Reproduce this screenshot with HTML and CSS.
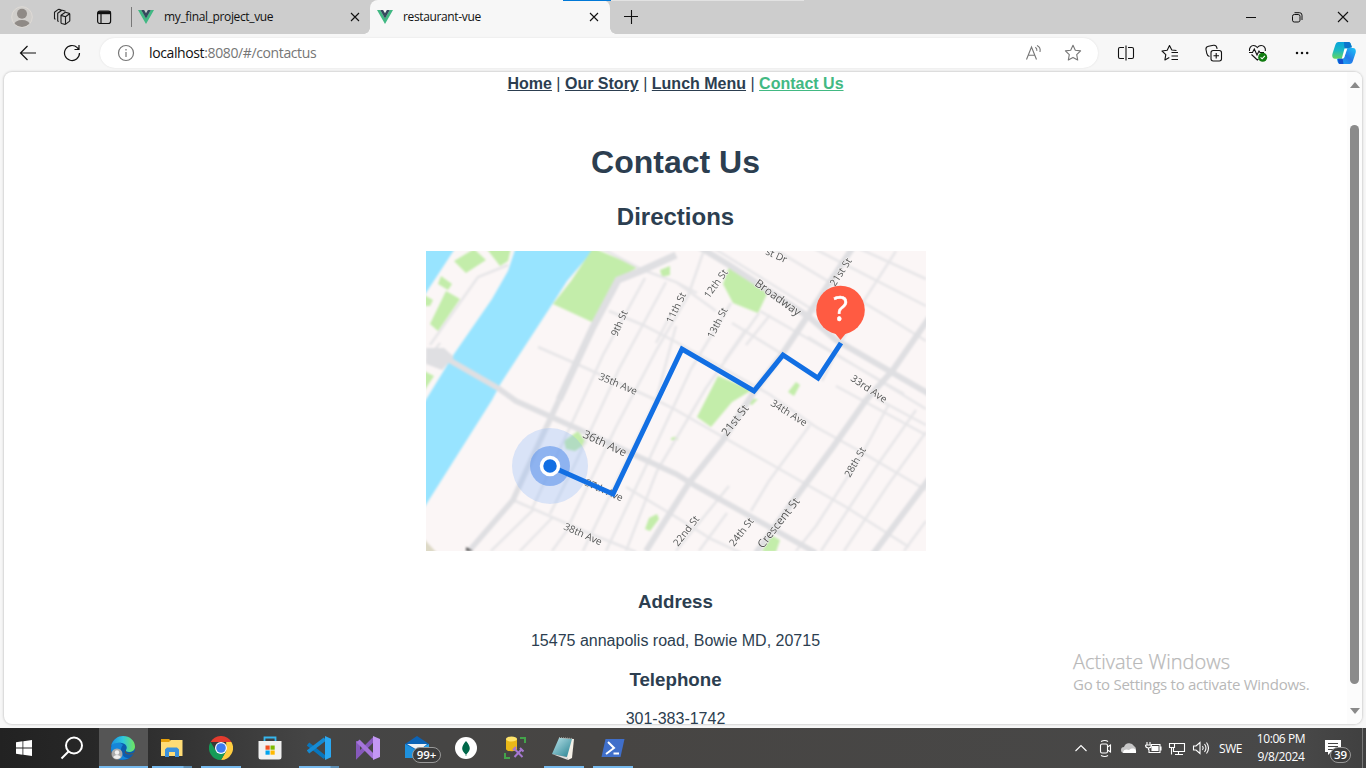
FILE: index.html
```html
<!DOCTYPE html>
<html lang="en">
<head>
<meta charset="utf-8">
<title>restaurant-vue</title>
<link rel="stylesheet" href="styles.css">
</head>
<body>
<svg class="defs" width="0" height="0">
  <defs>
    <symbol id="vue" viewBox="0 0 16 14"><path fill="#41b883" d="M0 0h3.2L8 8.3 12.8 0H16L8 14z"/><path fill="#35495e" d="M3.2 0h2.9L8 3.3 9.900 0h2.900L8 8.400z"/></symbol>
    <symbol id="close" viewBox="0 0 10 10"><path d="M1 1l8 8M9 1L1 9" fill="none" stroke="#111" stroke-width="1.1"/></symbol>
  </defs>
</svg>

<header class="tabbar">
  <div class="slot profile"><svg width="22" height="22" viewBox="0 0 22 22"><defs><clipPath id="pc"><circle cx="11" cy="11" r="10"/></clipPath></defs><circle cx="11" cy="11" r="10.300" fill="#d0cecb" stroke="#dedad5"/><g clip-path="url(#pc)" fill="#8f8a86"><circle cx="11" cy="7.800" r="5"/><ellipse cx="11" cy="19" rx="8" ry="5"/></g></svg></div>
  <div class="slot work"><svg width="18" height="18" viewBox="0 0 18 18" fill="none" stroke="#1b1b1b" stroke-width="1.100" stroke-linejoin="round"><path d="M8 7.200l4-2.700q.6-.3 1.200-.1l2.800.9q.8.300.8 1.100v6q0 .6-.5 1l-3.600 2.700q-.5.400-1.200.200l-2.800-.9q-.7-.3-.7-1zM8 7.400l4.500 1.400v7.200M12.500 8.800L16.600 5.800"/><path d="M5.700 13.400l-1-.4V5.300L8.500 2.500q.5-.3 1-.2l3 .9M2.500 11.200l-1-.5V4.200L5 1.600q.5-.3 1-.2l2.500.7"/></svg></div>
  <div class="slot vert"><svg width="16" height="16" viewBox="0 0 16 16" fill="none" stroke="#111" stroke-width="1.200"><rect x="1.600" y="2" width="13" height="12.500" rx="2.200"/><path d="M2 3.700h12.500" stroke-width="3"/><path d="M5 5v9.500"/></svg></div>
  <i class="sep"></i>
  <div class="tab tab-idle"><svg class="vue"><use href="#vue"/></svg><span>my_final_project_vue</span><svg class="close"><use href="#close"/></svg></div>
  <div class="tab tab-active"><svg class="vue"><use href="#vue"/></svg><span>restaurant-vue</span><svg class="close"><use href="#close"/></svg><i class="blue-line"></i></div>
  <div class="strip"><svg width="16" height="16" viewBox="0 0 16 16"><path d="M1 7.500h14M8.500 1v14" stroke="#111" stroke-width="1.100"/></svg></div>
  <div class="winbtns">
    <svg width="46" height="34" viewBox="0 0 46 34"><path d="M18 17.500h10" stroke="#111"/></svg>
    <svg width="46" height="34" viewBox="0 0 46 34" fill="none" stroke="#111"><rect x="18.500" y="14.500" width="7.500" height="7.500" rx="1.800"/><path d="M20.500 12.700h5a2.500 2.500 0 0 1 2.500 2.500v4.800"/></svg>
    <svg width="46" height="34" viewBox="0 0 46 34"><path d="M18 12l10 10M28 12L18 22" stroke="#111" stroke-width="1.100"/></svg>
  </div>
</header>

<div class="toolbar">
  <div class="navbtn back"><svg width="18" height="16" viewBox="0 0 18 16" fill="none" stroke="#111" stroke-width="1.200"><path d="M17 8H1.500M8.500 1L1.500 8l7 7"/></svg></div>
  <div class="navbtn"><svg width="18" height="18" viewBox="0 0 18 18" fill="none" stroke="#111" stroke-width="1.200"><path d="M16.500 9A7.500 7.500 0 1 1 14.300 3.700L15.700 5M16 1v4.500h-4.500"/></svg></div>
  <div class="pill">
    <svg class="info" width="18" height="18" viewBox="0 0 18 18" fill="none" stroke="#767676" stroke-width="1.200"><circle cx="9" cy="9" r="7.500"/><path d="M9 8v5M9 5v1.500"/></svg>
    <span class="url"><b>localhost</b>:8080/#/contactus</span>
    <svg class="aloud" width="18" height="18" viewBox="0 0 18 18" fill="none" stroke="#767676" stroke-width="1.100"><path d="M1.500 15.500L6.500 3l5 12.500M3.300 11.300h6.500M10.300 3.300q2 1.200 1.500 3.500M12 1.600Q16 3.500 15 8"/></svg>
    <svg class="star" width="18" height="18" viewBox="0 0 18 18" fill="none" stroke="#767676" stroke-width="1.100" stroke-linejoin="round"><path d="M9 1.300l2.300 4.900 5.300.7-3.900 3.700 1 5.400L9 13.400 4.300 16l1-5.400L1.400 6.900l5.300-.7z"/></svg>
  </div>
  <div class="tools">
    <svg width="18" height="18" viewBox="0 0 18 18" fill="none" stroke="#111" stroke-width="1.100"><path d="M7 3.500H3A1.500 1.500 0 0 0 1.500 5v8A1.500 1.500 0 0 0 3 14.500h4M11 3.500h4A1.500 1.500 0 0 1 16.500 5v8a1.500 1.500 0 0 1-1.500 1.500h-4M9 1.500v15"/></svg>
    <svg width="18" height="18" viewBox="0 0 18 18" fill="none" stroke="#111" stroke-width="1.100" stroke-linejoin="round"><path d="M15.500 6.500l-4.700-.5-2.300-4.500-2.300 4.700-5.200.8 3.800 3.600-.9 5.300 4.400-2.500M10.500 8.500h6.500M10.500 12h6.500M10.500 15.500h6.500"/></svg>
    <svg width="18" height="18" viewBox="0 0 18 18" fill="none" stroke="#111" stroke-width="1.100"><rect x="6" y="6.500" width="10.500" height="10.500" rx="2.200"/><path d="M11.200 9v5.500M8.500 11.700H14M4.500 12.500C2 12 2 10.500 1.700 9L1 5.500C.7 3.500 2 2.600 3.500 2.300L8.500 1.300c2-.3 3 .7 3.400 2.500l.2 1"/></svg>
    <svg width="20" height="20" viewBox="0 0 20 20" fill="none" stroke="#111" stroke-width="1.100"><path d="M1.500 8C1 5 3 2.500 5.500 2.500c2 0 3 1 3.800 2 .8-1 1.900-2 3.800-2 3 0 4.800 2.500 4.200 5.500M3.500 11.500l5.800 5.500 1.200-1M1 9.500h3.500l1.800-3.500 2.700 6 2-4 1 1.500h4"/><circle cx="14.700" cy="14.200" r="4.500" fill="#107c10" stroke="none"/><path d="M12.600 14.300l1.500 1.500 2.800-3" stroke="#fff"/></svg>
    <svg width="18" height="18" viewBox="0 0 18 18" fill="#111"><circle cx="4" cy="9" r="1.250"/><circle cx="9" cy="9" r="1.250"/><circle cx="14.200" cy="9" r="1.250"/></svg>
    <svg class="copilot" width="24" height="24" viewBox="0 0 24 24"><defs><linearGradient id="ca" x2="0" y2="1"><stop stop-color="#07a3dc"/><stop offset=".5" stop-color="#1bb9c3"/><stop offset="1" stop-color="#64d55f"/></linearGradient><linearGradient id="cb" x1="1" x2="0" y2="1"><stop stop-color="#1dc7f8"/><stop offset=".5" stop-color="#2479e8"/><stop offset="1" stop-color="#18b2fa"/></linearGradient></defs><path fill="url(#ca)" d="M6.500 1h10.200c2 0 2.400 3 3.200 4.800l-5 2.400-2.400 7.200c-.6 1.600-1.500 2.300-3.300 2.300H3C0 17.700-.2 14.500.7 12L3.300 4C4 2.200 4.800 1 6.500 1z"/><path fill="#0c75cc" d="M12 1h4.700c1.700 0 2.300 3 3.200 5.500l-6.700.7C12 7 12.200 3 12 1z"/><path fill="url(#cb)" d="M15.500 7H21c3 0 3.200 3 2.500 5.200l-2.700 8c-.6 1.800-1.500 2.800-3.300 2.800H8c-2.200 0-2.500-3-3.200-5.300h4.400c1.800 0 2.700-.7 3.300-2.300l1.600-5.600c.3-1 .6-2 1.400-2.800z"/><path fill="#1451cf" d="M6 17.700h4.700L11.500 23H8c-1.500 0-2-2.300-2-5.300z"/><path fill="#fff" d="M12.500 7.500h2.800l-3 8.700c-.4 1-1.300 1.400-2.500 1.400z"/></svg>
  </div>
</div>

<div class="viewport">
  <main class="page">
    <nav><a>Home</a> | <a>Our Story</a> | <a>Lunch Menu</a> | <a class="current">Contact Us</a></nav>
    <h1>Contact Us</h1>
    <h2>Directions</h2>
    <svg class="map" width="500" height="300" viewBox="0 0 500 300">
      <defs>
        <filter id="soft" x="0" y="0" width="1" height="1" color-interpolation-filters="sRGB"><feGaussianBlur stdDeviation=".8"/></filter>
        <filter id="crisp" color-interpolation-filters="sRGB"><feGaussianBlur stdDeviation=".4"/></filter>
      </defs>
      <rect width="500" height="300" fill="#fbf6f6"/>
      <g filter="url(#soft)">
        <rect x="-5" y="-5" width="510" height="310" fill="#fbf6f6"/>
        <path fill="#98e4ff" d="M90-4L82 20 66 48 28 103-4 155V260L66 149 75 132 127 52 141 30 170-4zM-4-4H30L-4 48z"/>
        <g fill="#c3edaa">
          <path d="M167-3l45 19-22 13-24 42-39-18 18-23zM28 10L48-2l12 11-20 13zM60-3h25l-3 13-8 5zM15 25l11 8-4 6-10-6zM20 40l14 8-22 32-8-7zM-2 44l9 5-3 6h-6zM-2 120l10 5-10 15zM303 16l12 3 26 24-9 19-25-10-10-19zM292 125l34 14-20 12-21 25-14-10zM370 131l4 3-6 11-6-4zM345 284l9 5-4 12h-14l5-10zM138 190l14-10 9 12-12 8-9-2zM234 19l10-4v9l-8 2zM245 187l7-2v4h-7zM223 267l8-4 2 5-9 12-5-2zM322 148h10l-6 6-8-3z"/>
        </g>
        <g fill="none" stroke="#e7e6e8" stroke-width="2.500">
          <path d="M4 94L52 26 82 14M0 110L14 92"/>
          <path d="M112 96L153 114 230 149 250 159 297 186 357 220 420 256 483 296"/>
          <path d="M183 60L217 74 250 91 343 143 390 176 437 202 500 239"/>
          <path d="M177-2L217 19 250 31 290 60M250 31L271 42M306 72L356 103"/>
          <path d="M289-2L400 67M345-4L460 65 500 90M385-4L500 55M430-4L500 28M450 147L483 165 500 174"/>
          <path d="M334 60L478 143M382 86L500 158M410 135L500 184"/>
          <path d="M219 27L177 104 158 146 106 258M240 31L193 118 148 215 124 263M277 2L262 45 231 98 190 176 144 272"/>
          <path d="M250 75L230 149 157 300M305 52L265 118 220 215 180 300M333 62L280 137 231 220 200 300"/>
          <path d="M87 249L160 281 210 301M200 236L250 266 285 288 315 302"/>
          <path d="M470 0L430 62 396 130M384 174L343 230 325 260M463 153L435 205 390 275 370 300M490 159L450 216 395 300M500 181L462 234 418 300M500 270L478 300M303 235L250 300M301 262L273 300"/>
          <path d="M108 258L65 300M126 267L94 300M145 274L126 300M245 63L230 92M320 78L298 110M344 64L320 94"/>
        </g>
        <g fill="none" stroke="#dfdfe2">
          <path stroke-width="7" d="M250 4L217 19 192 29 167 76 133 149"/>
          <path stroke-width="5.500" d="M133 149L113 192 87 249 43 300"/>
          <path stroke-width="5.500" d="M18 106L72 137 90 150 150 177 250 223 270 235 390 302"/>
          <path stroke-width="6" d="M270-6L303 14 383 66 410 89 505 144"/>
          <path stroke-width="6" d="M427-4L377 72 357 102 328 141 297 189 263 232 220 300"/>
          <path stroke-width="6" d="M503 67L467 119 440 149 407 196 373 242 330 302M503 228L447 303"/>
        </g>
        <path d="M0 97h18l10 9-12 13-16-6z" fill="#dfdfe2"/>
        <path d="M-2 288l13 14H-2z" fill="#ddd9c6"/><path d="M40 296l7 4h-7z" fill="#555"/>
      </g>
      <g filter="url(#crisp)">
        <g class="streets">
          <text transform="translate(191 86) rotate(-66)">9th St</text>
          <text transform="translate(246 73) rotate(-64)">11th St</text>
          <text transform="translate(283 48) rotate(-54)">12th St</text>
          <text transform="translate(287 88) rotate(-63)">13th St</text>
          <text transform="translate(409 36) rotate(-57)">21st St</text>
          <text class="big" transform="translate(328 34) rotate(36)">Broadway</text>
          <text transform="translate(339 3) rotate(24)">st Dr</text>
          <text transform="translate(172 128) rotate(23)">35th Ave</text>
          <text class="big" transform="translate(156 186) rotate(25)">36th Ave</text>
          <text transform="translate(158 234) rotate(24)">37th Ave</text>
          <text transform="translate(137 278) rotate(24)">38th Ave</text>
          <text transform="translate(344 154) rotate(32)">34th Ave</text>
          <text transform="translate(424 129) rotate(34)">33rd Ave</text>
          <text class="big" transform="translate(301 186) rotate(-52)">21st St</text>
          <text transform="translate(424 227) rotate(-60)">28th St</text>
          <text transform="translate(252 296) rotate(-52)">22nd St</text>
          <text transform="translate(308 296) rotate(-52)">24th St</text>
          <text class="big" transform="translate(337 298) rotate(-52)">Crescent St</text>
        </g>
        <circle cx="124" cy="215" r="38" fill="#8bb7f7" opacity=".3"/>
        <circle cx="124" cy="215" r="20" fill="#6799ed" opacity=".65"/>
        <path d="M124 215L187 243 256 98 328 140 357 104 392 127 415 92" fill="none" stroke="#126fe3" stroke-width="5"/>
        <circle cx="124" cy="215" r="8.500" fill="#126fe3" stroke="#fff" stroke-width="3.500"/>
        <path d="M408 81l6.500 8 6.500-8z" fill="#ff5b42"/><circle cx="414.500" cy="59" r="24.300" fill="#ff5b42"/>
        <text class="q" x="414.500" y="70">?</text>
      </g>
    </svg>
    <h3>Address</h3>
    <p>15475 annapolis road, Bowie MD, 20715</p>
    <h3>Telephone</h3>
    <p>301-383-1742</p>
  </main>
  <div class="scroll"><i class="up"></i><i class="thumb"></i><i class="down"></i></div>
</div>
<div class="watermark"><div class="w1">Activate Windows</div><div class="w2">Go to Settings to activate Windows.</div></div>

<footer class="taskbar">
  <div class="apps">
    <div class="app"><svg width="16" height="16" viewBox="0 0 16 16" fill="#fff"><path d="M0 2.200l6.500-.9v6.300H0zM7.300 1.200L16 0v7.600H7.300zM0 8.400h6.500v6.300L0 13.800zM7.300 8.400H16V16l-8.700-1.200z"/></svg></div>
    <div class="app search"><svg width="24" height="24" viewBox="0 0 24 24" fill="none" stroke="#fff" stroke-width="2"><circle cx="14" cy="9.500" r="8"/><path d="M8.500 15.500L1.500 22.500"/></svg></div>
    <div class="app on active"><svg width="24" height="24" viewBox="0 0 24 24"><defs><linearGradient id="ea"><stop stop-color="#1c91df"/><stop offset=".5" stop-color="#30c8dc"/><stop offset="1" stop-color="#71e65c"/></linearGradient></defs><circle cx="12" cy="12" r="12" fill="#0c5cae"/><path fill="#1686d9" d="M0 12C1 6 8 5 12 9c-4 4-2 13 6 13C8 27 0 20 0 12z"/><path fill="url(#ea)" d="M0 10C2 3 7 0 12 0c7 0 12 5 12 10.500 0 4-3 5.500-6 5.500-2 0-3.500-1-3-2 2-3 0-6-4-7C7 6 2 7 0 10z"/><path fill="#555" d="M14.500 14c0 4 5 4.500 9.500 2l-1 2c-7 1.500-11-.5-8.500-4z"/><circle cx="6" cy="18" r="5.500" fill="#aaa"/><circle cx="6" cy="16.500" r="2.200" fill="#f0f0f0"/><path d="M2 21q4-4 8 0-4 4-8 0" fill="#eee"/></svg></div>
    <div class="app on multi"><svg width="22" height="20" viewBox="0 0 22 20"><path fill="#e6a10b" d="M0 1h8l2 2v5H0z"/><path fill="#ffdc75" d="M0 4h8l2-2h11.500v16H0z"/><path fill="#3b91dc" d="M4 19V11.500L6 9.500h10l2 2V19h-4v-5H8v5z"/></svg></div>
    <div class="app on"><svg width="24" height="24" viewBox="0 0 24 24"><path fill="#e33b2e" d="M1.600 6A12 12 0 0 1 22.400 6H12z"/><path fill="#ffcd40" d="M22.400 6A12 12 0 0 1 12 24l5.200-9V6z"/><path fill="#159b57" d="M1.600 6A12 12 0 0 0 12 24l5.200-9L7 15z"/><circle cx="12" cy="12" r="6" fill="#fff"/><circle cx="12" cy="12" r="4.800" fill="#3e7cf0"/></svg></div>
    <div class="app"><svg width="24" height="24" viewBox="0 0 24 24"><path d="M6.500 6V1.500h11V6" fill="none" stroke="#36b6ed" stroke-width="1.800"/><path d="M.5 5h23v16a2.500 2.500 0 0 1-2.500 2.500H3A2.500 2.500 0 0 1 .5 21z" fill="#f1f1f1"/><path fill="#f25022" d="M7.500 9.500h4.200v4.200H7.500z"/><path fill="#7fba00" d="M12.500 9.500h4.200v4.200h-4.200z"/><path fill="#00a4ef" d="M7.500 14.500h4.200v4.200H7.500z"/><path fill="#ffb900" d="M12.500 14.500h4.200v4.200h-4.200z"/></svg></div>
    <div class="app on multi"><svg width="24" height="24" viewBox="0 0 24 24"><path fill="none" stroke="#0876bd" stroke-width="4" d="M1 8l17 13.500"/><path fill="none" stroke="#158bd4" stroke-width="4" d="M1 16L18 3"/><path fill="#2aa8f2" d="M18 0l6 2.700v18.600L18 24z"/></svg></div>
    <div class="app"><svg width="24" height="24" viewBox="0 0 24 24"><path fill="none" stroke="#8659bb" stroke-width="4" d="M2 5v14L18 3"/><path fill="none" stroke="#a575da" stroke-width="4.500" d="M2 5l16 16"/><path fill="#c397f4" d="M17 0l7 3v18l-7 3z"/></svg></div>
    <div class="app mail"><svg width="24" height="24" viewBox="0 0 24 24"><path fill="#0c63b5" d="M0 8l12-8 12 8v8H0z"/><path fill="#f0f3f5" d="M2 8h20l-8 7z"/><path fill="#1e91de" d="M0 8l24 13v1H0z"/><path fill="#2da4e9" d="M24 8L8 17l10 5h6z"/></svg><span class="badge">99+</span></div>
    <div class="app"><svg width="22" height="22" viewBox="0 0 22 22"><circle cx="11" cy="11" r="11" fill="#fff"/><path fill="#00684a" d="M11 4c5 6 5 9 .3 13.500V19h-.6v-1.500C6 13 6 10 11 4z"/></svg></div>
    <div class="app"><svg width="24" height="24" viewBox="0 0 24 24"><path fill="#eab818" d="M3 3v10c0 3 11 3 11 0V3z"/><ellipse cx="8.500" cy="3" rx="5.500" ry="2.500" fill="#ffe46a"/><path d="M17 2h5v5M2 17v5h5" fill="none" stroke="#43a34a" stroke-width="2"/><path d="M11.500 13l8 8M18.500 13.500l-7 7.500M10 14l3-3M17 12l3.500 3.500" stroke="#a678d1" stroke-width="2"/></svg></div>
    <div class="app on"><svg width="24" height="24" viewBox="0 0 24 24"><defs><linearGradient id="na" x2="1" y2="1"><stop stop-color="#bce5ec"/><stop offset="1" stop-color="#25808f"/></linearGradient></defs><path fill="#f4f0e7" d="M7 2l15 1-2 19-4 2z"/><path fill="url(#na)" d="M7 2l13 1-5 18L0 18z"/><path fill="#ddd" d="M0 18l15 3 1 3z"/><path d="M7 1.500l14 1" stroke="#a6a5a1" stroke-dasharray="1 1"/></svg></div>
    <div class="app on"><svg width="24" height="20" viewBox="0 0 24 20"><path fill="#406fca" d="M4.500 1H23.500L19.500 19H.5z"/><path d="M7 4l6 6-8 6M12.500 15.500H18" fill="none" stroke="#fff" stroke-width="2"/></svg></div>
  </div>
  <div class="tray">
    <svg viewBox="0 0 24 24"><path d="M6.500 15l5.500-5.500L17.500 15"/></svg>
    <svg viewBox="0 0 24 24"><rect x="7.500" y="8" width="7" height="9" rx="1.500"/><path d="M14.500 11l3-2v7l-3-2M8 5.500q4-2 7 0M8 19.500q4 2 7 0"/></svg>
    <svg viewBox="0 0 24 24"><path d="M7 17a3 3 0 0 1 0-6 5.500 5.500 0 0 1 10-1 4 4 0 0 1 0 7z" fill="#c6c6c6" stroke="none"/><path d="M6 17c0-4 4-4 6-3 4-3 8-1 7 3z" fill="#fff" stroke="none"/></svg>
    <svg viewBox="0 0 24 24"><path d="M10 8.500h9v8H8v-3M20 10.500v4M6 6v3M9 6v3M4.500 9h6q0 3-3 3T4.500 9M7.500 12v2"/><path d="M11 10.500h6v4h-6z" fill="#fff"/></svg>
    <svg viewBox="0 0 24 24"><path d="M9.500 7.500h10v8h-11v-4M13.500 15.500v3M10 18.500h8M4.500 7.500h5v4h-5zM6.500 11.500v7"/></svg>
    <svg viewBox="0 0 24 24"><path d="M4.500 10h2.500l4-3.500v11L7 14H4.500zM13.500 10q1.500 2 0 4M15.500 8q3 4 0 8M17.500 6.500q4 5.500 0 11"/></svg>
    <span class="lang">SWE</span>
    <div class="clock"><div>10:06 PM</div><div>9/8/2024</div></div>
    <div class="note"><svg width="18" height="17" viewBox="0 0 18 17"><path fill="#fff" d="M1 1h16v12H7l-3 3v-3H1z"/><path d="M4 4.500h10M4 7.500h10M4 10.500h6" stroke="#444"/></svg><span class="badge small">39</span></div>
    <i class="peek"></i>
  </div>
</footer>
</body>
</html>
```
FILE: styles.css
```css
* { box-sizing: border-box; }
body { margin: 0; width: 1366px; height: 768px; overflow: hidden; display: flex; flex-direction: column; background: #f7f7f7; font-family: "Open Sans", "Noto Sans", sans-serif; }
.defs { position: absolute; }
svg { display: block; flex: none; }

.tabbar { height: 34px; display: flex; align-items: center; background: #cdcdcd; flex: none; }
.slot { display: flex; justify-content: center; }
.profile { width: 44px; }
.work { width: 36px; }
.vert { width: 48px; }
.sep { width: 1px; height: 20px; background: #777; margin-left: 3px; }
.tab { display: flex; align-items: center; height: 34px; font-size: 12px; color: #111; }
.tab span { flex: 1; letter-spacing: -0.36px; line-height: 16px; }
.tab-idle { width: 238px; padding: 0 10px 0 6px; }
.tab-active { width: 240px; padding: 0 11px 0 7px; background: #f7f7f7; border-radius: 8px 8px 0 0; position: relative; }
.tab-active::before, .tab-active::after { content: ""; position: absolute; bottom: 0; width: 6px; height: 6px; }
.tab-active::before { left: -6px; background: radial-gradient(circle at 0 0, #cdcdcd 5.5px, #f7f7f7 6px); }
.tab-active::after { right: -6px; background: radial-gradient(circle at 100% 0, #cdcdcd 5.5px, #f7f7f7 6px); }
.blue-line { position: absolute; top: 0; left: 193px; width: 48px; height: 1px; background: #0078d7; }
.vue { width: 16px; height: 14px; margin-right: 10px; }
.close { width: 10px; height: 10px; }
.strip { width: 194px; height: 34px; padding: 8px 13px; border-top: 1px solid #e2e2e2; }
.winbtns { display: flex; margin-left: auto; }

.toolbar { height: 38px; flex: none; display: flex; align-items: center; }
.navbtn { width: 44px; display: flex; justify-content: center; }
.back { margin-left: 6px; }
.pill { width: 998px; height: 30px; margin-left: 6px; padding-left: 17px; background: #fff; border-radius: 15px; display: flex; align-items: center; box-shadow: 0 0 2px #ddd; }
.url { margin-left: 14px; font-size: 14px; color: #767676; letter-spacing: -0.38px; flex: 1; line-height: 20px; }
.url b { font-weight: 400; color: #111; }
.star { margin: 0 16px 0 21px; }
.tools { display: grid; grid-template-columns: repeat(5, 44px) 40px; padding-left: 6px; align-items: center; justify-items: center; }

.viewport { height: 652px; margin: 0 4px; display: flex; background: #fff; border-radius: 8px; overflow: hidden; box-shadow: 0 0 2px 1px #d4d4d4; flex: none; }
.page { flex: 1; padding-top: 3px; text-align: center; font-family: "Liberation Sans", Arial, sans-serif; font-size: 16px; line-height: 18px; color: #2c3e50; }
nav { height: 48px; }
nav a { font-weight: 700; text-decoration: underline; }
nav .current { color: #42b983; }
h1 { font-size: 32px; line-height: 37px; margin: 21px 0 22px; }
h2 { font-size: 24px; line-height: 27px; margin: 0 0 21px; }
.map { margin: 0 auto 40px; position: relative; left: 0.5px; }
h3 { font-size: 18.72px; line-height: 22px; margin: 0; }
p { margin: 19px 0; }
.streets { font: 10px "Open Sans", sans-serif; fill: #555; stroke: #f8f6f6; stroke-width: 1px; paint-order: stroke; }
.streets .big { font-size: 11.5px; }
.q { font: 34px "Open Sans", sans-serif; fill: #fff; stroke: #fff; stroke-width: 0.4px; text-anchor: middle; }
.scroll { width: 15px; background: #fcfcfc; display: flex; flex-direction: column; align-items: center; padding: 10px 0; }
.up, .down { border: 5px solid transparent; border-top: 0; border-bottom: 6px solid #8a8a8a; }
.down { border-top: 6px solid #8a8a8a; border-bottom: 0; margin-top: auto; }
.thumb { width: 9px; height: 559px; margin-top: 37px; background: #8b8b8b; border-radius: 5px; }

.watermark { position: absolute; left: 1073px; top: 649px; color: #b8b8b8; white-space: nowrap; }
.w1 { font-size: 20px; line-height: 26px; font-weight: 300; -webkit-text-stroke: 0.25px #b8b8b8; }
.w2 { font-size: 15px; line-height: 20px; letter-spacing: -0.27px; margin-top: -1px; }

.taskbar { height: 40px; margin-top: 4px; flex: none; display: flex; justify-content: space-between; background: linear-gradient(90deg, #222 0, #272727 90px, #454545 310px, #474543 600px, #484848 1300px, #404040); }
.apps { display: grid; grid-template-columns: 49px 50px repeat(11, 49px); }
.app { position: relative; display: flex; align-items: center; justify-content: center; padding-right: 1px; }
.search { padding-right: 4px; }
.active { background: #555; }
.on::after { content: ""; position: absolute; bottom: 0; left: 4px; right: 5px; height: 2px; background: #76b9ed; }
.active.on::after { left: 0; right: 0; }
.multi.on::after { background: linear-gradient(90deg, #76b9ed 31px, #5c8db2 32px); }
.badge { position: absolute; left: 19px; top: 19px; width: 29px; height: 16px; border: 1px solid #999; border-radius: 8px; background: #3c3c3c; color: #fff; font-size: 11.5px; line-height: 14px; font-weight: 600; text-align: center; }
.tray { display: flex; align-items: center; color: #fff; font-size: 12px; }
.tray > svg { width: 24px; height: 24px; fill: none; stroke: #fff; stroke-width: 1.1; }
.lang { width: 30px; margin-left: 6px; letter-spacing: -0.4px; }
.clock { width: 64px; text-align: center; line-height: 18px; letter-spacing: -0.4px; }
.note { width: 49px; height: 40px; position: relative; padding: 11px 0 0 11px; }
.badge.small { left: 17px; width: 21px; }
.peek { width: 1px; height: 40px; background: #777; margin-right: 3px; }
```
